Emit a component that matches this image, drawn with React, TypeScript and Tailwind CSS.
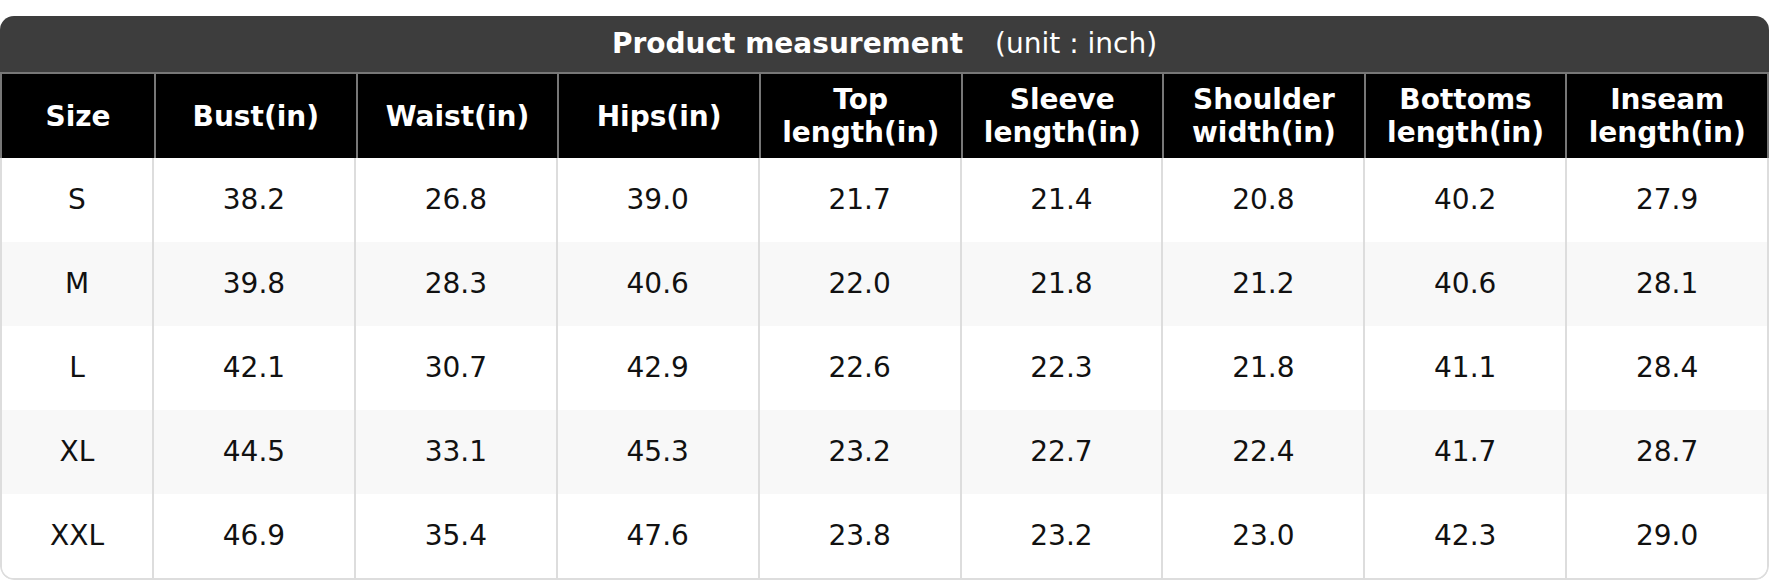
const headers = [
  ["Size"],
  ["Bust(in)"],
  ["Waist(in)"],
  ["Hips(in)"],
  ["Top", "length(in)"],
  ["Sleeve", "length(in)"],
  ["Shoulder", "width(in)"],
  ["Bottoms", "length(in)"],
  ["Inseam", "length(in)"],
];

const rows = [
  ["S", "38.2", "26.8", "39.0", "21.7", "21.4", "20.8", "40.2", "27.9"],
  ["M", "39.8", "28.3", "40.6", "22.0", "21.8", "21.2", "40.6", "28.1"],
  ["L", "42.1", "30.7", "42.9", "22.6", "22.3", "21.8", "41.1", "28.4"],
  ["XL", "44.5", "33.1", "45.3", "23.2", "22.7", "22.4", "41.7", "28.7"],
  ["XXL", "46.9", "35.4", "47.6", "23.8", "23.2", "23.0", "42.3", "29.0"],
];

export default function App() {
  return (
    <div className="w-[1770px] h-[580px] bg-white pt-4 font-['DejaVu_Sans',sans-serif]">
      <div className="w-[1769px] rounded-[14px] overflow-hidden">
        {/* Title bar */}
        <div className="h-[56px] bg-[#3d3d3d] flex items-center justify-center text-white text-[28px]">
          <span className="font-bold">Product measurement</span>
          <span className="ml-[32px]">(unit : inch)</span>
        </div>

        {/* Header row */}
        <div className="grid grid-cols-[152px_repeat(8,1fr)] h-[86px] bg-black border-t-2 border-x-2 border-[#777]">
          {headers.map((h, i) => (
            <div
              key={i}
              className={`flex flex-col items-center justify-center text-white font-bold text-[28px] leading-[33px] ${i > 0 ? "border-l-2 border-[#777]" : ""}`}
            >
              {h.map((line) => (
                <span key={line}>{line}</span>
              ))}
            </div>
          ))}
        </div>

        {/* Body */}
        <div className="border-x-2 border-b-2 border-[#ddd] rounded-b-[14px] overflow-hidden">
          {rows.map((r, ri) => (
            <div
              key={ri}
              className={`grid grid-cols-[150px_repeat(8,1fr)] h-[84px] ${ri % 2 === 1 ? "bg-[#f8f8f8]" : "bg-white"}`}
            >
              {r.map((v, ci) => (
                <div
                  key={ci}
                  className={`flex items-center justify-center text-[28px] text-[#111] ${ci > 0 ? "border-l-2 border-[#ddd]" : ""}`}
                >
                  {v}
                </div>
              ))}
            </div>
          ))}
        </div>
      </div>
    </div>
  );
}
